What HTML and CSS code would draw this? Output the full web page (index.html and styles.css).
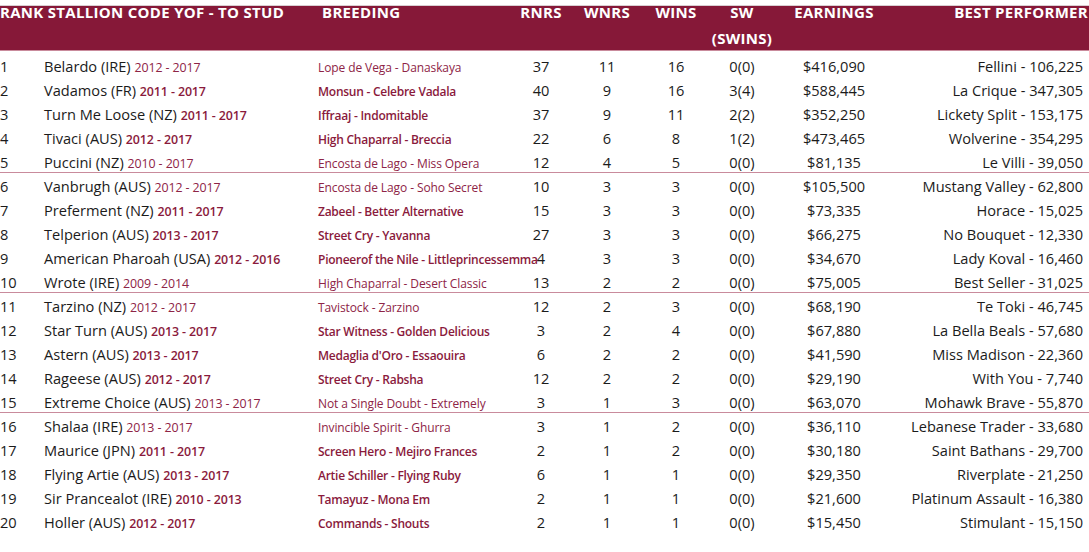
FILE: index.html
```html
<!DOCTYPE html>
<html>
<head>
<meta charset="utf-8">
<link rel="stylesheet" href="styles.css">
</head>
<body>
<div class="table">
  <div class="head">
    <div class="hrow">
      <div class="hc span2">RANK STALLION CODE YOF - TO STUD</div>
      <div class="hc hbreed">BREEDING</div>
      <div class="hc c">RNRS</div>
      <div class="hc c">WNRS</div>
      <div class="hc c">WINS</div>
      <div class="hc c">SW<br>(SWINS)</div>
      <div class="hc c">EARNINGS</div>
      <div class="hc r hbest">BEST PERFORMER</div>
    </div>
  </div>
  <div class="body">
    <div class="row lt"><span>1</span><span class="nm">Belardo (IRE) <em>2012 - 2017</em></span><span class="br">Lope de Vega - Danaskaya</span><span class="c">37</span><span class="c">11</span><span class="c">16</span><span class="c">0(0)</span><span class="c">$416,090</span><span class="r">Fellini - 106,225</span></div>
    <div class="row"><span>2</span><span class="nm">Vadamos (FR) <em>2011 - 2017</em></span><span class="br">Monsun - Celebre Vadala</span><span class="c">40</span><span class="c">9</span><span class="c">16</span><span class="c">3(4)</span><span class="c">$588,445</span><span class="r">La Crique - 347,305</span></div>
    <div class="row"><span>3</span><span class="nm">Turn Me Loose (NZ) <em>2011 - 2017</em></span><span class="br">Iffraaj - Indomitable</span><span class="c">37</span><span class="c">9</span><span class="c">11</span><span class="c">2(2)</span><span class="c">$352,250</span><span class="r">Lickety Split - 153,175</span></div>
    <div class="row"><span>4</span><span class="nm">Tivaci (AUS) <em>2012 - 2017</em></span><span class="br">High Chaparral - Breccia</span><span class="c">22</span><span class="c">6</span><span class="c">8</span><span class="c">1(2)</span><span class="c">$473,465</span><span class="r">Wolverine - 354,295</span></div>
    <div class="row lt sep"><span>5</span><span class="nm">Puccini (NZ) <em>2010 - 2017</em></span><span class="br">Encosta de Lago - Miss Opera</span><span class="c">12</span><span class="c">4</span><span class="c">5</span><span class="c">0(0)</span><span class="c">$81,135</span><span class="r">Le Villi - 39,050</span></div>
    <div class="row lt"><span>6</span><span class="nm">Vanbrugh (AUS) <em>2012 - 2017</em></span><span class="br">Encosta de Lago - Soho Secret</span><span class="c">10</span><span class="c">3</span><span class="c">3</span><span class="c">0(0)</span><span class="c">$105,500</span><span class="r">Mustang Valley - 62,800</span></div>
    <div class="row"><span>7</span><span class="nm">Preferment (NZ) <em>2011 - 2017</em></span><span class="br">Zabeel - Better Alternative</span><span class="c">15</span><span class="c">3</span><span class="c">3</span><span class="c">0(0)</span><span class="c">$73,335</span><span class="r">Horace - 15,025</span></div>
    <div class="row"><span>8</span><span class="nm">Telperion (AUS) <em>2013 - 2017</em></span><span class="br">Street Cry - Yavanna</span><span class="c">27</span><span class="c">3</span><span class="c">3</span><span class="c">0(0)</span><span class="c">$66,275</span><span class="r">No Bouquet - 12,330</span></div>
    <div class="row"><span>9</span><span class="nm">American Pharoah (USA) <em>2012 - 2016</em></span><span class="br">Pioneerof the Nile - Littleprincessemma</span><span class="c">4</span><span class="c">3</span><span class="c">3</span><span class="c">0(0)</span><span class="c">$34,670</span><span class="r">Lady Koval - 16,460</span></div>
    <div class="row lt sep"><span>10</span><span class="nm">Wrote (IRE) <em>2009 - 2014</em></span><span class="br">High Chaparral - Desert Classic</span><span class="c">13</span><span class="c">2</span><span class="c">2</span><span class="c">0(0)</span><span class="c">$75,005</span><span class="r">Best Seller - 31,025</span></div>
    <div class="row lt"><span>11</span><span class="nm">Tarzino (NZ) <em>2012 - 2017</em></span><span class="br">Tavistock - Zarzino</span><span class="c">12</span><span class="c">2</span><span class="c">3</span><span class="c">0(0)</span><span class="c">$68,190</span><span class="r">Te Toki - 46,745</span></div>
    <div class="row"><span>12</span><span class="nm">Star Turn (AUS) <em>2013 - 2017</em></span><span class="br">Star Witness - Golden Delicious</span><span class="c">3</span><span class="c">2</span><span class="c">4</span><span class="c">0(0)</span><span class="c">$67,880</span><span class="r">La Bella Beals - 57,680</span></div>
    <div class="row"><span>13</span><span class="nm">Astern (AUS) <em>2013 - 2017</em></span><span class="br">Medaglia d'Oro - Essaouira</span><span class="c">6</span><span class="c">2</span><span class="c">2</span><span class="c">0(0)</span><span class="c">$41,590</span><span class="r">Miss Madison - 22,360</span></div>
    <div class="row"><span>14</span><span class="nm">Rageese (AUS) <em>2012 - 2017</em></span><span class="br">Street Cry - Rabsha</span><span class="c">12</span><span class="c">2</span><span class="c">2</span><span class="c">0(0)</span><span class="c">$29,190</span><span class="r">With You - 7,740</span></div>
    <div class="row lt sep"><span>15</span><span class="nm">Extreme Choice (AUS) <em>2013 - 2017</em></span><span class="br">Not a Single Doubt - Extremely</span><span class="c">3</span><span class="c">1</span><span class="c">3</span><span class="c">0(0)</span><span class="c">$63,070</span><span class="r">Mohawk Brave - 55,870</span></div>
    <div class="row lt"><span>16</span><span class="nm">Shalaa (IRE) <em>2013 - 2017</em></span><span class="br">Invincible Spirit - Ghurra</span><span class="c">3</span><span class="c">1</span><span class="c">2</span><span class="c">0(0)</span><span class="c">$36,110</span><span class="r">Lebanese Trader - 33,680</span></div>
    <div class="row"><span>17</span><span class="nm">Maurice (JPN) <em>2011 - 2017</em></span><span class="br">Screen Hero - Mejiro Frances</span><span class="c">2</span><span class="c">1</span><span class="c">2</span><span class="c">0(0)</span><span class="c">$30,180</span><span class="r">Saint Bathans - 29,700</span></div>
    <div class="row"><span>18</span><span class="nm">Flying Artie (AUS) <em>2013 - 2017</em></span><span class="br">Artie Schiller - Flying Ruby</span><span class="c">6</span><span class="c">1</span><span class="c">1</span><span class="c">0(0)</span><span class="c">$29,350</span><span class="r">Riverplate - 21,250</span></div>
    <div class="row"><span>19</span><span class="nm">Sir Prancealot (IRE) <em>2010 - 2013</em></span><span class="br">Tamayuz - Mona Em</span><span class="c">2</span><span class="c">1</span><span class="c">1</span><span class="c">0(0)</span><span class="c">$21,600</span><span class="r">Platinum Assault - 16,380</span></div>
    <div class="row"><span>20</span><span class="nm">Holler (AUS) <em>2012 - 2017</em></span><span class="br">Commands - Shouts</span><span class="c">2</span><span class="c">1</span><span class="c">1</span><span class="c">0(0)</span><span class="c">$15,450</span><span class="r">Stimulant - 15,150</span></div>
  </div>
</div>
</body>
</html>
```

FILE: styles.css
```css
html, body {
  margin: 0;
  padding: 0;
  background: #ffffff;
}
body {
  font-family: "Open Sans", "Liberation Sans", sans-serif;
  color: #1b1b1b;
  width: 1089px;
  height: 552px;
  overflow: hidden;
}
.table {
  padding-top: 5px;
}
.head {
  border-top: 1px solid #d8cfd2;
  background: #861838;
  height: 44px;
  border-bottom: 1px solid #c98b9c;
}
.hrow,
.row {
  display: grid;
  grid-template-columns: 44px 274px 196px 54px 78px 60px 72px 112px 193px;
}
.hrow {
  margin-top: -7.5px;
  color: #ffffff;
  font-weight: 700;
  font-size: 15px;
  line-height: 26px;
  letter-spacing: 0.3px;
}
.span2 { grid-column: span 2; white-space: nowrap; }
.hbreed { padding-left: 4px; }
.hbest { margin-right: -5px; }
.c { text-align: center; white-space: nowrap; }
.r { text-align: right; white-space: nowrap; }
.body {
  padding-top: 2px;
}
.row {
  box-sizing: border-box;
  height: 24px;
  padding-top: 4px;
  font-size: 14.6px;
  line-height: 18px;
  align-items: baseline;
}
.row.sep {
  border-bottom: 1px solid #c98b9c;
}
.row span { white-space: nowrap; }
.nm em {
  font-style: normal;
  font-size: 12.4px;
  color: #8a1a3c;
  font-weight: 600;
  letter-spacing: -0.1px;
}
.br {
  font-size: 12px;
  color: #8a1a3c;
  font-weight: 600;
  letter-spacing: -0.25px;
}
.row.lt .nm em,
.row.lt .br {
  font-weight: 400;
  letter-spacing: -0.1px;
  color: #8e2446;
}
```
